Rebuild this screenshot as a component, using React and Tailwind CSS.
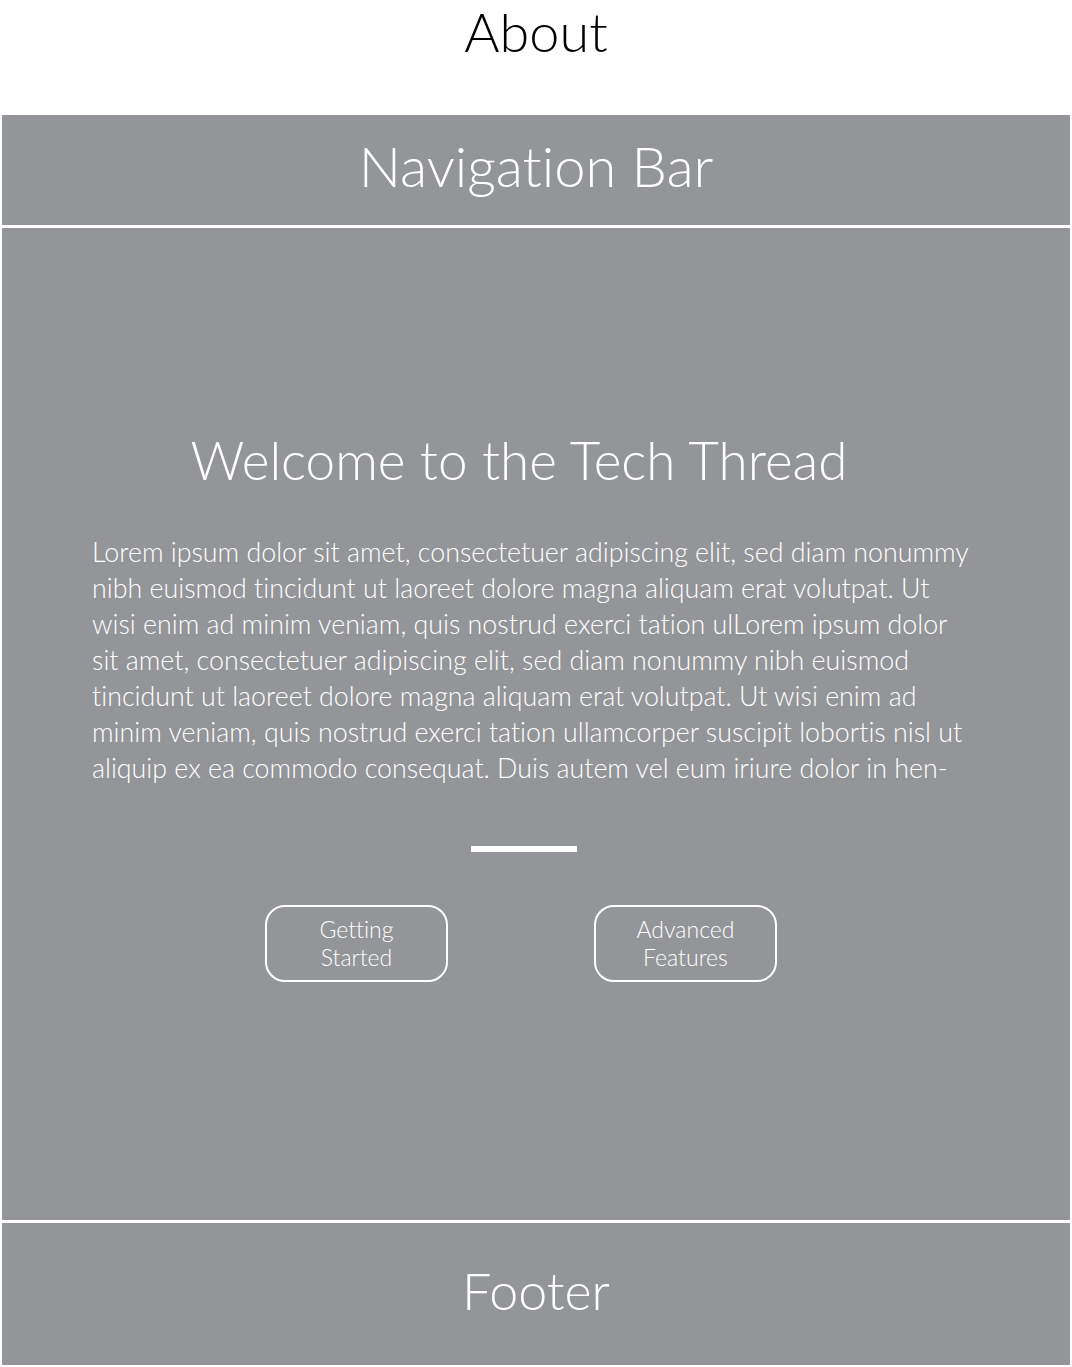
export default function App() {
  const lines = [
    "Lorem ipsum dolor sit amet, consectetuer adipiscing elit, sed diam nonummy",
    "nibh euismod tincidunt ut laoreet dolore magna aliquam erat volutpat. Ut",
    "wisi enim ad minim veniam, quis nostrud exerci tation ulLorem ipsum dolor",
    "sit amet, consectetuer adipiscing elit, sed diam nonummy nibh euismod",
    "tincidunt ut laoreet dolore magna aliquam erat volutpat. Ut wisi enim ad",
    "minim veniam, quis nostrud exerci tation ullamcorper suscipit lobortis nisl ut",
    "aliquip ex ea commodo consequat. Duis autem vel eum iriure dolor in hen-",
  ];

  return (
    <div className="min-h-screen bg-white font-['Lato',sans-serif] font-light [font-variant-ligatures:none]">
      <h1 className="h-[115px] pt-[2px] text-center text-[54px] leading-[60px] text-black">
        About
      </h1>

      <div className="flex flex-col gap-[3px] px-[2px] pb-[2px]">
        <nav className="flex h-[110px] items-center justify-center bg-[#949599] pb-[8px] text-[56px] text-white">
          Navigation Bar
        </nav>

        <main className="flex h-[992px] flex-col bg-[#949599] text-white">
          <h2 className="mt-[198px] pr-[34px] text-center text-[53px] leading-[68px]">
            Welcome to the Tech Thread
          </h2>

          <p className="mt-[40px] pl-[90px] text-[26.8px] leading-[36px]">
            {lines.map((l) => (
              <span key={l} className="block whitespace-nowrap">
                {l}
              </span>
            ))}
          </p>

          <div className="mt-[60px] ml-[469px] h-[6px] w-[106px] bg-white" />

          <div className="mt-[53px] flex justify-center gap-[146px] pr-[30px]">
            <button className="flex h-[77px] w-[183px] flex-col items-center justify-center rounded-[20px] border-2 border-white pb-[2px] text-[23px] leading-[28px]">
              <span>Getting</span>
              <span>Started</span>
            </button>
            <button className="flex h-[77px] w-[183px] flex-col items-center justify-center rounded-[20px] border-2 border-white pb-[2px] text-[23px] leading-[28px]">
              <span>Advanced</span>
              <span>Features</span>
            </button>
          </div>
        </main>

        <footer className="flex h-[142px] items-center justify-center bg-[#949599] pb-[8px] text-[52px] text-white">
          Footer
        </footer>
      </div>
    </div>
  );
}
